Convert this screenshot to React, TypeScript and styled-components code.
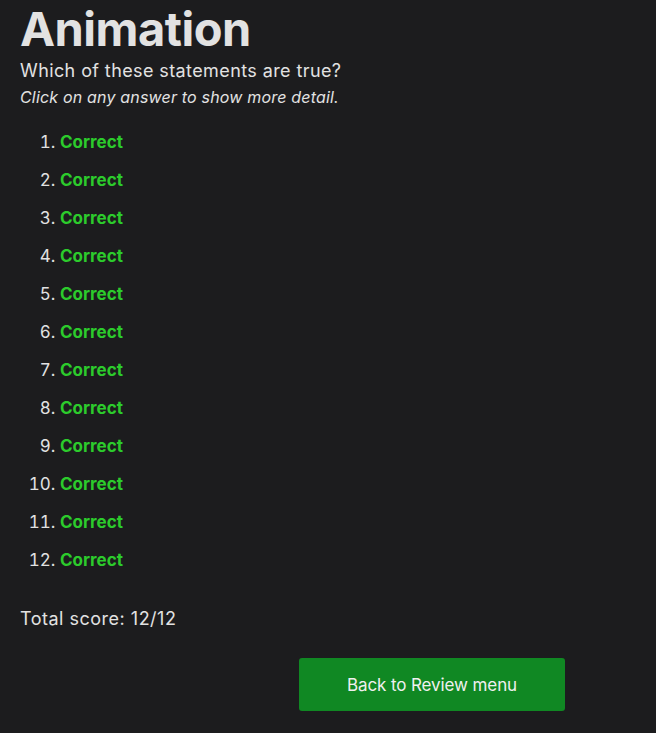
import React from "react";
import styled, { createGlobalStyle } from "styled-components";

const Global = createGlobalStyle`
  html, body { margin: 0; padding: 0; background: #1c1c1e; }
  body { font-family: Inter, "Noto Sans", sans-serif; color: #e2e2e2; }
`;

const Page = styled.div`
  padding: 0 20px;
  min-height: 733px;
  box-sizing: border-box;
`;

const Title = styled.h1`
  margin: 0;
  font-size: 47px;
  font-weight: 700;
  line-height: 58px;
  color: #e2e2e2;
  letter-spacing: -0.5px;
`;

const Question = styled.p`
  margin: 0;
  font-size: 18px;
  line-height: 26px;
  letter-spacing: 0.4px;
`;

const Hint = styled.p`
  margin: 0;
  font-size: 16px;
  font-style: italic;
  line-height: 27px;
  letter-spacing: 0.18px;
`;

const List = styled.ol`
  margin: 19px 0 0;
  padding-left: 40px;
  display: flex;
  flex-direction: column;
  gap: 14px;
`;

const Item = styled.li`
  font-size: 17px;
  line-height: 24px;
`;

const Verdict = styled.span<{ $ok: boolean }>`
  font-weight: 700;
  color: ${(p) => (p.$ok ? "#2ccb2c" : "#e04040")};
`;

const Score = styled.p`
  margin: 34px 0 0;
  font-size: 18px;
  line-height: 26px;
  letter-spacing: 0.5px;
`;

const Footer = styled.div`
  margin-top: 26px;
  padding-left: 279px;
  display: flex;
`;

const Button = styled.button`
  width: 266px;
  height: 53px;
  border: none;
  border-radius: 3px;
  background: #108823;
  color: #f0f0f0;
  font-family: Inter, "Noto Sans", sans-serif;
  font-size: 17px;
  letter-spacing: -0.1px;
  cursor: pointer;
`;

export default function App() {
  const answers = Array.from({ length: 12 }, () => true);
  return (
    <>
      <Global />
      <Page>
        <Title>Animation</Title>
        <Question>Which of these statements are true?</Question>
        <Hint>Click on any answer to show more detail.</Hint>
        <List>
          {answers.map((ok, i) => (
            <Item key={i}>
              <Verdict $ok={ok}>{ok ? "Correct" : "Incorrect"}</Verdict>
            </Item>
          ))}
        </List>
        <Score>Total score: 12/12</Score>
        <Footer>
          <Button>Back to Review menu</Button>
        </Footer>
      </Page>
    </>
  );
}
